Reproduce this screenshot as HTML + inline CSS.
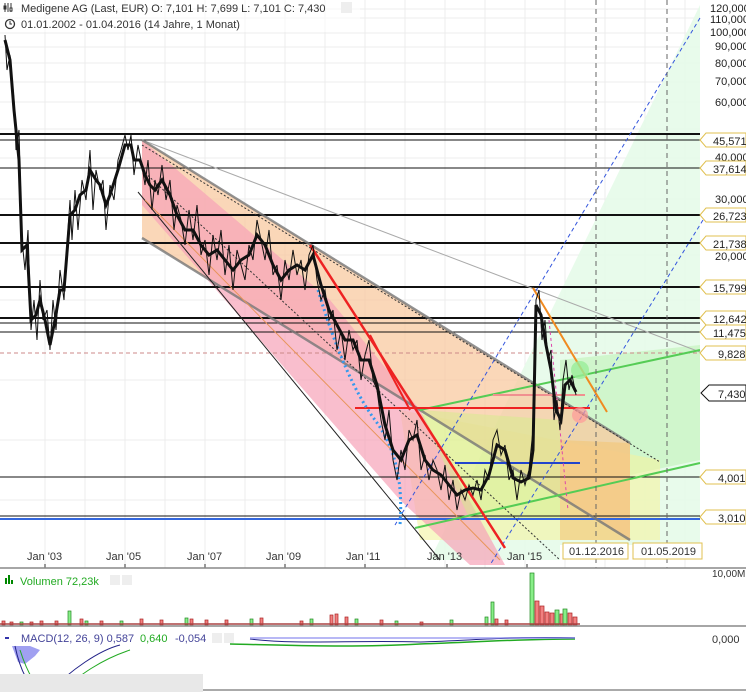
<!DOCTYPE html>
<html><head><meta charset="utf-8"><style>
html,body{margin:0;padding:0;background:#fff;}
svg{display:block;font-family:"Liberation Sans",sans-serif;}
</style></head><body>
<svg width="746" height="692" viewBox="0 0 746 692" xmlns="http://www.w3.org/2000/svg">
<rect width="746" height="692" fill="#fff"/>
<g stroke="#ececec" stroke-width="1">
<line x1="45" y1="0" x2="45" y2="568"/><line x1="85" y1="0" x2="85" y2="568"/><line x1="125" y1="0" x2="125" y2="568"/><line x1="165" y1="0" x2="165" y2="568"/><line x1="205" y1="0" x2="205" y2="568"/><line x1="245" y1="0" x2="245" y2="568"/><line x1="285" y1="0" x2="285" y2="568"/><line x1="325" y1="0" x2="325" y2="568"/><line x1="365" y1="0" x2="365" y2="568"/><line x1="405" y1="0" x2="405" y2="568"/><line x1="445" y1="0" x2="445" y2="568"/><line x1="485" y1="0" x2="485" y2="568"/><line x1="525" y1="0" x2="525" y2="568"/><line x1="565" y1="0" x2="565" y2="568"/><line x1="605" y1="0" x2="605" y2="568"/><line x1="645" y1="0" x2="645" y2="568"/><line x1="685" y1="0" x2="685" y2="568"/>
<line x1="0" y1="9" x2="700" y2="9"/><line x1="0" y1="18" x2="700" y2="18"/><line x1="0" y1="33" x2="700" y2="33"/><line x1="0" y1="47" x2="700" y2="47"/><line x1="0" y1="63" x2="700" y2="63"/><line x1="0" y1="82" x2="700" y2="82"/><line x1="0" y1="102" x2="700" y2="102"/><line x1="0" y1="129" x2="700" y2="129"/><line x1="0" y1="158" x2="700" y2="158"/><line x1="0" y1="199" x2="700" y2="199"/><line x1="0" y1="255" x2="700" y2="255"/><line x1="0" y1="300" x2="700" y2="300"/><line x1="0" y1="380" x2="700" y2="380"/><line x1="0" y1="440" x2="700" y2="440"/><line x1="0" y1="500" x2="700" y2="500"/>
</g>
<polygon points="430,560 700,5 700,545 560,545 560,560" fill="#e6fbe9" opacity="0.9"/>
<polygon points="560,360 700,345 700,460 560,490" fill="#c9f5c4" opacity="0.8"/>
<polygon points="400,410 660,460 660,540 420,540" fill="#f4f3a0" opacity="0.6"/>
<polygon points="142,140 630,443 630,540 142,238" fill="#f8c9a0" opacity="0.75"/>
<polygon points="142,140 330,300 420,410 505,565 470,565 400,500 142,205" fill="#f7a3b8" opacity="0.7"/>
<polygon points="560,440 630,443 630,540 560,540" fill="#f3c777" opacity="0.6"/>
<polygon points="420,410 560,420 560,520 470,520" fill="#d4ed8a" opacity="0.5"/>
<g stroke="#111">
<line x1="0" y1="134" x2="700" y2="134" stroke-width="2"/>
<line x1="0" y1="140" x2="700" y2="140" stroke-width="1"/>
<line x1="0" y1="168" x2="700" y2="168" stroke-width="1"/>
<line x1="0" y1="215" x2="700" y2="215" stroke-width="2"/>
<line x1="0" y1="243" x2="700" y2="243" stroke-width="2"/>
<line x1="0" y1="287" x2="700" y2="287" stroke-width="2"/>
<line x1="0" y1="318" x2="700" y2="318" stroke-width="2"/>
<line x1="0" y1="323" x2="700" y2="323" stroke-width="1"/>
<line x1="0" y1="332" x2="700" y2="332" stroke-width="1"/>
<line x1="0" y1="477" x2="700" y2="477" stroke-width="1"/>
<line x1="0" y1="516" x2="700" y2="516" stroke-width="1"/>
</g>
<line x1="0" y1="519" x2="700" y2="519" stroke="#3366dd" stroke-width="2"/>
<line x1="0" y1="353" x2="700" y2="353" stroke="#c88" stroke-dasharray="4,3"/>
<line x1="142" y1="140" x2="700" y2="352" stroke="#aaa" stroke-width="1"/>
<line x1="142" y1="140" x2="630" y2="443" stroke="#777" stroke-width="2.5" opacity="0.8"/>
<line x1="142" y1="238" x2="630" y2="540" stroke="#777" stroke-width="2.5" opacity="0.8"/>
<line x1="138" y1="192" x2="440" y2="560" stroke="#222" stroke-width="1"/>
<line x1="145" y1="200" x2="500" y2="560" stroke="#e8955a" stroke-width="1"/>
<line x1="142" y1="145" x2="660" y2="462" stroke="#333" stroke-width="1" stroke-dasharray="2,2"/>
<line x1="142" y1="170" x2="560" y2="560" stroke="#333" stroke-width="1" stroke-dasharray="2,2"/>
<line x1="420" y1="410" x2="700" y2="350" stroke="#5c5" stroke-width="2"/>
<line x1="415" y1="528" x2="700" y2="463" stroke="#5c5" stroke-width="2"/>
<line x1="700" y1="18" x2="395" y2="525" stroke="#3355dd" stroke-width="1" stroke-dasharray="4,3"/>
<line x1="703" y1="220" x2="490" y2="565" stroke="#3355dd" stroke-width="1" stroke-dasharray="4,3"/>
<line x1="310" y1="245" x2="505" y2="548" stroke="#e22" stroke-width="2.5"/>
<line x1="370" y1="335" x2="410" y2="410" stroke="#e22" stroke-width="2"/>
<line x1="355" y1="408" x2="590" y2="408" stroke="#e22" stroke-width="2"/>
<line x1="493" y1="395" x2="585" y2="395" stroke="#f09090" stroke-width="2"/>
<line x1="455" y1="463" x2="580" y2="463" stroke="#2244cc" stroke-width="2"/>
<line x1="533" y1="288" x2="607" y2="412" stroke="#f08a20" stroke-width="2"/>
<path d="M318,290 Q345,380 375,420 T400,525" fill="none" stroke="#3399ee" stroke-width="3" stroke-dasharray="2,3"/>
<line x1="549" y1="320" x2="568" y2="510" stroke="#d4a" stroke-width="1" stroke-dasharray="3,3"/>
<circle cx="580" cy="370" r="9" fill="#9e9" opacity="0.8"/>
<circle cx="580" cy="415" r="8" fill="#f99" opacity="0.7"/>
<line x1="596" y1="0" x2="596" y2="568" stroke="#666" stroke-dasharray="5,4"/>
<line x1="667" y1="0" x2="667" y2="568" stroke="#666" stroke-dasharray="5,4"/>
<polyline fill="none" stroke="#111" stroke-width="1" points="5,35 7,70 10,55 14,100 16,150 19,130 22,240 25,270 28,230 31,330 34,300 37,340 40,280 43,320 47,310 50,350 53,300 56,330 60,270 64,300 66,260 70,200 72,240 75,190 78,230 82,180 86,200 90,150 93,210 96,170 100,190 103,180 106,230 110,185 114,200 118,160 121,150 125,135 128,150 131,135 134,175 138,145 141,160 145,185 148,160 152,210 155,180 158,195 162,165 166,200 170,180 174,230 177,205 181,220 185,245 189,210 193,240 197,205 201,255 205,240 209,275 213,235 217,260 221,230 225,275 229,245 233,290 237,250 241,265 245,280 249,245 253,260 257,220 261,240 265,260 269,230 273,275 277,265 281,300 285,260 289,280 293,250 297,275 301,260 305,290 309,255 313,245 317,280 321,300 325,290 329,320 333,310 337,350 341,330 345,360 349,330 353,350 357,340 361,380 365,355 369,340 373,380 377,390 381,420 385,440 389,410 393,460 397,480 401,450 405,470 409,430 413,440 417,420 421,470 425,455 429,480 433,460 437,470 441,490 445,465 449,500 453,480 457,510 461,490 465,500 469,485 473,495 477,480 481,500 485,470 489,480 493,440 497,430 501,455 505,445 509,480 513,470 517,500 521,470 525,485 529,470 533,430 536,300 539,290 542,340 545,320 548,360 551,350 554,420 557,400 560,430 563,380 566,360 569,390 572,375 576,395"/>
<polyline fill="none" stroke="#111" stroke-width="3" points="5,40 10,60 14,110 19,160 22,250 27,245 31,320 36,315 40,300 45,320 50,345 55,320 60,290 64,290 70,215 75,210 80,195 86,190 90,170 96,180 100,185 106,205 110,195 118,170 125,145 131,145 134,160 140,160 145,175 150,185 155,190 162,180 170,195 177,215 185,230 193,230 201,245 209,255 217,250 225,260 233,270 241,260 249,255 257,235 265,245 273,265 281,280 289,270 297,265 305,270 313,255 321,285 329,310 337,325 345,340 353,340 361,360 369,360 377,385 385,425 393,450 401,460 409,440 417,435 425,460 433,470 441,475 449,485 457,495 465,490 473,488 481,490 489,475 497,445 505,450 513,478 521,482 529,478 533,450 536,305 541,315 546,345 551,370 556,410 561,420 565,385 570,380 576,392"/>
<g font-size="11" fill="#222">
<text x="710" y="12">120,000</text><text x="710" y="23">110,000</text><text x="710" y="36">100,000</text><text x="715" y="50">90,000</text><text x="715" y="67">80,000</text><text x="715" y="85">70,000</text><text x="715" y="106">60,000</text><text x="715" y="203">30,000</text><text x="715" y="260">20,000</text><text x="715" y="161">40,000</text>
</g>
<g font-size="11" fill="#222" stroke-width="1">
<g><path d="M700,140 l6,-7 h40 v14 h-40 z" fill="#fff" stroke="#e0c050"/><text x="713" y="145">45,571</text></g>
<g><path d="M700,168 l6,-7 h40 v14 h-40 z" fill="#fff" stroke="#e0c050"/><text x="713" y="173">37,614</text></g>
<g><path d="M700,215 l6,-7 h40 v14 h-40 z" fill="#fff" stroke="#e0c050"/><text x="713" y="220">26,723</text></g>
<g><path d="M700,243 l6,-7 h40 v14 h-40 z" fill="#fff" stroke="#e0c050"/><text x="713" y="248">21,738</text></g>
<g><path d="M700,287 l6,-7 h40 v14 h-40 z" fill="#fff" stroke="#e0c050"/><text x="713" y="292">15,799</text></g>
<g><path d="M700,318 l6,-7 h40 v14 h-40 z" fill="#fff" stroke="#e0c050"/><text x="713" y="323">12,642</text></g>
<g><path d="M700,332 l6,-7 h40 v14 h-40 z" fill="#fff" stroke="#e0c050"/><text x="713" y="337">11,475</text></g>
<g><path d="M700,353 l6,-7 h40 v14 h-40 z" fill="#fff" stroke="#e0c050"/><text x="718" y="358">9,828</text></g>
<g><path d="M701,393 l8,-8 h37 v16 h-37 z" fill="#fff" stroke="#111"/><text x="718" y="398">7,430</text></g>
<g><path d="M700,477 l6,-7 h40 v14 h-40 z" fill="#fff" stroke="#e0c050"/><text x="718" y="482">4,001</text></g>
<g><path d="M700,517 l6,-7 h40 v14 h-40 z" fill="#fff" stroke="#e0c050"/><text x="718" y="522">3,010</text></g>
</g>
<rect x="0" y="0" width="360" height="32" fill="#fff" opacity="0.6"/>
<g font-size="11" fill="#333">
<g stroke="#333" stroke-width="1"><line x1="5" y1="3" x2="5" y2="12"/><line x1="8" y1="3" x2="8" y2="12"/><line x1="11" y1="3" x2="11" y2="12"/><rect x="4" y="6" width="2" height="3" fill="#333"/><rect x="10" y="8" width="2" height="3" fill="#fff"/></g>
<text x="21" y="12">Medigene AG (Last, EUR)  O: 7,101  H: 7,699  L: 7,101  C: 7,430</text>
<rect x="341" y="2" width="11" height="11" fill="#eee"/>
<circle cx="10" cy="24" r="4.5" fill="none" stroke="#333" stroke-width="1.3"/><path d="M10,21 v3 h2" stroke="#333" fill="none"/>
<text x="21" y="28">01.01.2002 - 01.04.2016 (14 Jahre, 1 Monat)</text>
</g>
<g font-size="11" fill="#333">
<text x="27" y="560">Jan '03</text><text x="106" y="560">Jan '05</text><text x="187" y="560">Jan '07</text><text x="266" y="560">Jan '09</text><text x="346" y="560">Jan '11</text><text x="427" y="560">Jan '13</text><text x="507" y="560">Jan '15</text>
</g>
<g stroke="#333"><line x1="45" y1="564" x2="45" y2="568"/><line x1="125" y1="564" x2="125" y2="568"/><line x1="205" y1="564" x2="205" y2="568"/><line x1="285" y1="564" x2="285" y2="568"/><line x1="365" y1="564" x2="365" y2="568"/><line x1="447" y1="564" x2="447" y2="568"/><line x1="527" y1="564" x2="527" y2="568"/></g>
<g font-size="11" fill="#333">
<rect x="563" y="543" width="65" height="16" fill="#fff" stroke="#e0c050"/><text x="569" y="555">01.12.2016</text>
<rect x="633" y="543" width="69" height="16" fill="#fff" stroke="#e0c050"/><text x="641" y="555">01.05.2019</text>
</g>
<line x1="0" y1="568" x2="746" y2="568" stroke="#888" stroke-width="1.5"/>
<g font-size="11">
<rect x="5" y="578" width="2" height="6" fill="#080"/><rect x="8" y="575" width="2" height="9" fill="#080"/><rect x="11" y="580" width="2" height="4" fill="#080"/>
<text x="20" y="585" fill="#2a2">Volumen  72,23k</text>
<rect x="110" y="575" width="10" height="10" fill="#eee"/><rect x="122" y="575" width="10" height="10" fill="#eee"/>
<text x="712" y="577" fill="#333" font-size="10">10,00M</text>
</g>
<g stroke="#a22" fill="#f08080" stroke-width="0.7">
<rect x="2" y="621" width="3" height="4"/><rect x="10" y="622" width="3" height="3"/><rect x="30" y="622" width="3" height="3"/><rect x="40" y="621" width="3" height="4"/><rect x="55" y="621" width="3" height="4"/>
<rect x="80" y="619" width="3" height="6"/><rect x="100" y="621" width="3" height="4"/><rect x="140" y="619" width="3" height="6"/><rect x="160" y="620" width="3" height="5"/><rect x="190" y="619" width="3" height="6"/><rect x="205" y="620" width="3" height="5"/><rect x="225" y="620" width="3" height="5"/><rect x="260" y="618" width="3" height="7"/><rect x="300" y="621" width="3" height="4"/><rect x="330" y="615" width="3" height="10"/><rect x="335" y="614" width="3" height="11"/><rect x="345" y="617" width="3" height="8"/><rect x="380" y="620" width="3" height="5"/><rect x="420" y="622" width="3" height="3"/><rect x="495" y="619" width="3" height="6"/><rect x="505" y="620" width="3" height="5"/><rect x="535" y="601" width="4" height="24"/><rect x="540" y="606" width="4" height="19"/><rect x="545" y="612" width="4" height="13"/><rect x="550" y="613" width="4" height="12"/><rect x="560" y="614" width="4" height="11"/><rect x="568" y="613" width="4" height="12"/><rect x="573" y="617" width="4" height="8"/>
</g>
<g stroke="#282" fill="#8e8" stroke-width="0.7">
<rect x="20" y="622" width="3" height="3"/><rect x="68" y="611" width="3" height="14"/><rect x="85" y="621" width="3" height="4"/><rect x="120" y="621" width="3" height="4"/><rect x="185" y="618" width="3" height="7"/><rect x="250" y="619" width="3" height="6"/><rect x="310" y="619" width="3" height="6"/><rect x="355" y="619" width="3" height="6"/><rect x="395" y="621" width="3" height="4"/><rect x="450" y="620" width="3" height="5"/><rect x="485" y="617" width="3" height="8"/><rect x="491" y="602" width="3" height="23"/><rect x="530" y="573" width="4" height="52"/><rect x="555" y="610" width="4" height="15"/><rect x="563" y="609" width="4" height="16"/>
</g>
<line x1="0" y1="624" x2="580" y2="624" stroke="#a44" stroke-width="1.5"/>
<line x1="0" y1="626" x2="746" y2="626" stroke="#888" stroke-width="1.5"/>
<g font-size="11">
<rect x="5" y="637" width="4" height="2" fill="#33a"/>
<text x="21" y="642" fill="#449">MACD(12, 26, 9)  0,587</text><text x="140" y="642" fill="#2a2">0,640</text><text x="175" y="642" fill="#449">-0,054</text>
<rect x="212" y="633" width="10" height="10" fill="#eee"/><rect x="224" y="633" width="10" height="10" fill="#eee"/>
<text x="712" y="643" fill="#333">0,000</text>
</g>
<polygon points="12,646 18,662 25,664 35,656 40,650 30,646" fill="#8888ee" opacity="0.8"/>
<path d="M15,646 C20,670 30,690 40,692 M50,692 C70,670 100,650 120,645" stroke="#228" fill="none"/>
<path d="M20,650 C28,675 38,690 45,692 M60,692 C80,675 100,660 130,650" stroke="#2a2" fill="none"/>
<path d="M250,639 C300,645 350,640 420,642 C480,640 520,636 575,638" stroke="#228" fill="none"/>
<path d="M230,644 C280,645 350,648 420,644 C480,642 520,639 575,639" stroke="#2a2" fill="none" stroke-width="1.5"/>
<rect x="250" y="637" width="325" height="2" fill="#8888ee" opacity="0.6"/>
<rect x="0" y="674" width="203" height="18" fill="#e8e8e8"/>
<line x1="203" y1="690" x2="746" y2="690" stroke="#555"/>
</svg>
</body></html>
